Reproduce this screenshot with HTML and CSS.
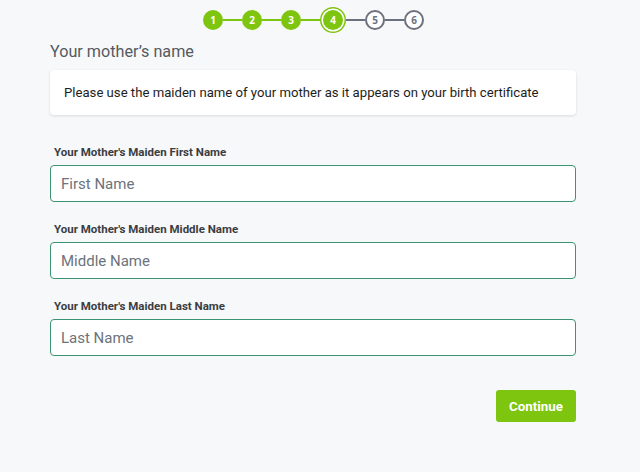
FILE: index.html
```html
<!DOCTYPE html>
<html>
<head>
<meta charset="utf-8">
<link rel="stylesheet" href="styles.css">
</head>
<body>
<div class="page">
  <div class="steps">
    <span class="step done">1</span><span class="line done"></span>
    <span class="step done">2</span><span class="line done"></span>
    <span class="step done">3</span><span class="line done"></span>
    <span class="step current">4</span><span class="line"></span>
    <span class="step">5</span><span class="line"></span>
    <span class="step">6</span>
  </div>
  <h1 class="title">Your mother’s name</h1>
  <div class="card">Please use the maiden name of your mother as it appears on your birth certificate</div>
  <form class="form">
    <div class="field">
      <label class="label">Your Mother's Maiden First Name</label>
      <input class="input" type="text" placeholder="First Name">
    </div>
    <div class="field">
      <label class="label">Your Mother's Maiden Middle Name</label>
      <input class="input" type="text" placeholder="Middle Name">
    </div>
    <div class="field">
      <label class="label">Your Mother's Maiden Last Name</label>
      <input class="input" type="text" placeholder="Last Name">
    </div>
    <div class="actions">
      <button class="btn" type="button">Continue</button>
    </div>
  </form>
</div>
</body>
</html>
```
FILE: styles.css
```css
* { box-sizing: border-box; }
html, body { margin: 0; padding: 0; }
body {
  background: #f7f8fa;
  font-family: Roboto, "Liberation Sans", sans-serif;
  width: 640px;
  height: 472px;
  overflow: hidden;
}
.page {
  width: 526px;
  margin-left: 50px;
  padding-top: 10px;
}
.steps {
  display: flex;
  align-items: center;
  justify-content: center;
  height: 20px;
  margin-left: 1px;
}
.step {
  width: 20px;
  height: 20px;
  border-radius: 50%;
  border: 2px solid #6d717d;
  background: #fff;
  color: #6d717d;
  font-family: "Open Sans", sans-serif;
  font-weight: 700;
  font-size: 10px;
  display: flex;
  align-items: center;
  justify-content: center;
  flex: none;
}
.step.done, .step.current {
  background: #7ec50f;
  border-color: #7ec50f;
  color: #fff;
}
.step.current {
  margin: 0 3px;
  box-shadow: 0 0 0 1.5px #fff, 0 0 0 3px #7ec50f;
}
.line {
  width: 19px;
  height: 2px;
  background: #6d717d;
  flex: none;
}
.line.done { background: #7ec50f; }
.title {
  margin: 12px 0 0;
  font-size: 16.2px;
  font-weight: 400;
  color: #555a60;
  line-height: 20px;
}
.card {
  margin-top: 8px;
  background: #fff;
  border-radius: 4px;
  box-shadow: 0 1px 3px rgba(0,0,0,0.12);
  height: 45px;
  padding: 0 14px;
  display: flex;
  align-items: center;
  font-size: 13.15px;
  color: #1c1e21;
  white-space: nowrap;
}
.form {
  margin-top: 30px;
  display: flex;
  flex-direction: column;
  gap: 20px;
}
.field {
  display: flex;
  flex-direction: column;
}
.label {
  font-size: 11.5px;
  font-weight: 700;
  color: #3a3d42;
  line-height: 14px;
  padding-left: 4px;
  margin-bottom: 6px;
}
.input {
  height: 37px;
  border: 1px solid #3d9472;
  border-radius: 4px;
  background: #fff;
  padding: 0 10px;
  font-family: Roboto, "Liberation Sans", sans-serif;
  font-size: 15px;
  color: #333;
  outline: none;
}
.input::placeholder { color: #6c737a; }
.actions {
  display: flex;
  justify-content: flex-end;
  margin-top: 14px;
}
.btn {
  width: 80px;
  height: 32px;
  background: #7ec50f;
  color: #fff;
  border: none;
  border-radius: 3px;
  font-family: Roboto, "Liberation Sans", sans-serif;
  font-weight: 700;
  font-size: 13.3px;
  padding: 0;
}
```
